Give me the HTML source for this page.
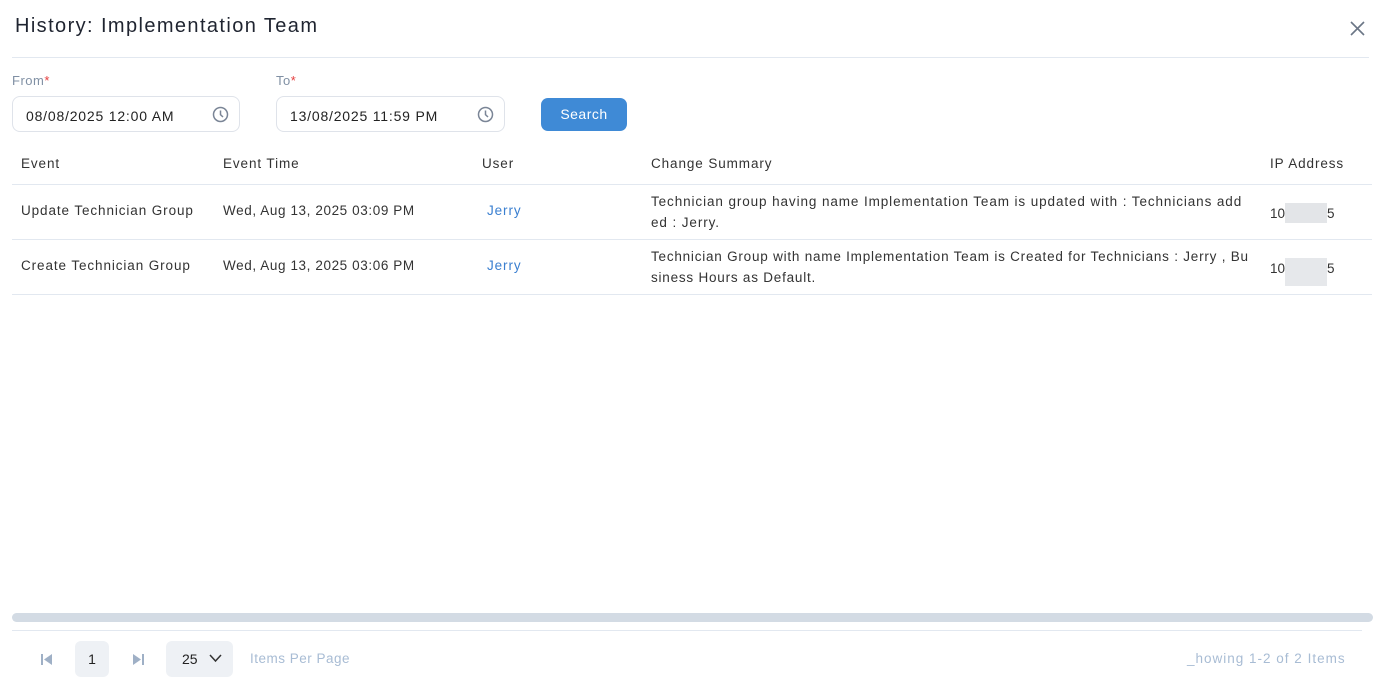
<!DOCTYPE html>
<html><head><style>
*{box-sizing:border-box;margin:0;padding:0}
body{width:1383px;height:698px;background:#fff;font-family:"Liberation Sans",sans-serif;color:#2d3748;position:relative;overflow:hidden}
.a{position:absolute;white-space:nowrap}
.t{font-size:13.5px;color:#333;letter-spacing:0.9px}
.hr{position:absolute;height:1px;background:#e2e8f0}
.inp{position:absolute;border:1px solid #dfe3ea;border-radius:8px;height:36px;top:96px;font-size:14px;color:#222;padding:11px 0 0 13px;letter-spacing:0.8px}
.clk{position:absolute;right:10px;top:9px}
</style></head><body>
<div class="a" style="left:15px;top:15px;font-size:20px;color:#1f2430;letter-spacing:1.4px">History: Implementation Team</div>
<svg class="a" style="left:1350px;top:21px" width="15" height="15" viewBox="0 0 15 15"><path d="M1 1L14 14M14 1L1 14" stroke="#6b7686" stroke-width="1.6"/></svg>
<div class="hr" style="left:12px;top:57px;width:1357px"></div>
<div class="a" style="left:12px;top:73px;font-size:13px;color:#8090a4;letter-spacing:0.5px">From<span style="color:#e53e3e">*</span></div>
<div class="a" style="left:276px;top:73px;font-size:13px;color:#8090a4;letter-spacing:0.5px">To<span style="color:#e53e3e">*</span></div>
<div class="inp" style="left:12px;width:228px">08/08/2025 12:00 AM<svg class="clk" width="17" height="17" viewBox="0 0 17 17"><circle cx="8.5" cy="8.5" r="7" fill="none" stroke="#7a8596" stroke-width="1.5"/><path d="M8.5 4.5V8.7L11 11" fill="none" stroke="#7a8596" stroke-width="1.5"/></svg></div>
<div class="inp" style="left:276px;width:229px">13/08/2025 11:59 PM<svg class="clk" width="17" height="17" viewBox="0 0 17 17"><circle cx="8.5" cy="8.5" r="7" fill="none" stroke="#7a8596" stroke-width="1.5"/><path d="M8.5 4.5V8.7L11 11" fill="none" stroke="#7a8596" stroke-width="1.5"/></svg></div>
<div class="a" style="left:541px;top:98px;width:86px;height:33px;background:#3f8ad6;border-radius:7px;color:#fff;font-size:14px;text-align:center;line-height:32px;letter-spacing:0.5px">Search</div>

<div class="a t" style="left:21px;top:156px">Event</div>
<div class="a t" style="left:223px;top:156px">Event Time</div>
<div class="a t" style="left:482px;top:156px">User</div>
<div class="a t" style="left:651px;top:156px">Change Summary</div>
<div class="a t" style="left:1270px;top:156px">IP Address</div>
<div class="hr" style="left:12px;top:184px;width:1360px"></div>
<div class="a t" style="left:21px;top:203px">Update Technician Group</div>
<div class="a t" style="left:223px;top:203px;letter-spacing:0.6px">Wed, Aug 13, 2025 03:09 PM</div>
<div class="a t" style="left:487px;top:203px;color:#3a7fd0">Jerry</div>
<div class="a t" style="left:651px;top:191px;line-height:21px">Technician group having name Implementation Team is updated with : Technicians add<br>ed : Jerry.</div>
<div class="a t" style="left:1270px;top:203px;letter-spacing:0">10<span style="display:inline-block;width:42px;height:20px;background:#e3e5e8;vertical-align:-5px"></span>5</div>
<div class="hr" style="left:12px;top:239px;width:1360px"></div>
<div class="a t" style="left:21px;top:258px">Create Technician Group</div>
<div class="a t" style="left:223px;top:258px;letter-spacing:0.6px">Wed, Aug 13, 2025 03:06 PM</div>
<div class="a t" style="left:487px;top:258px;color:#3a7fd0">Jerry</div>
<div class="a t" style="left:651px;top:246px;line-height:21px;letter-spacing:0.78px">Technician Group with name Implementation Team is Created for Technicians : Jerry , Bu<br>siness Hours as Default.</div>
<div class="a t" style="left:1270px;top:258px;letter-spacing:0">10<span style="display:inline-block;width:42px;height:28px;background:#e6e8eb;vertical-align:-13px"></span>5</div>
<div class="hr" style="left:12px;top:294px;width:1360px"></div>

<div class="a" style="left:12px;top:613px;width:1361px;height:9px;background:#d3dbe4;border-radius:5px"></div>
<div class="hr" style="left:12px;top:630px;width:1350px"></div>
<svg class="a" style="left:41px;top:654px" width="12" height="11" viewBox="0 0 12 11"><path d="M1 0V11" stroke="#9fb0c6" stroke-width="2"/><path d="M11 0V11L3 5.5Z" fill="#9fb0c6"/></svg>
<div class="a" style="left:75px;top:641px;width:34px;height:36px;background:#eef1f5;border-radius:6px;text-align:center;line-height:36px;font-size:14px;color:#222">1</div>
<svg class="a" style="left:132px;top:654px" width="12" height="11" viewBox="0 0 12 11"><path d="M11 0V11" stroke="#9fb0c6" stroke-width="2"/><path d="M1 0V11L9 5.5Z" fill="#9fb0c6"/></svg>
<div class="a" style="left:166px;top:641px;width:67px;height:36px;background:#eef1f5;border-radius:6px;font-size:14px;color:#222;padding:10px 0 0 16px">25</div>
<svg class="a" style="left:209px;top:654px" width="13" height="9" viewBox="0 0 13 9"><path d="M1 1L6.5 7L12 1" fill="none" stroke="#333" stroke-width="1.5"/></svg>
<div class="a" style="left:250px;top:651px;font-size:13.5px;color:#a8bcd4;letter-spacing:0.5px">Items Per Page</div>
<div class="a" style="left:1187px;top:651px;font-size:13.5px;color:#a8bcd4;letter-spacing:1px">_howing 1-2 of 2 Items</div>
</body></html>
